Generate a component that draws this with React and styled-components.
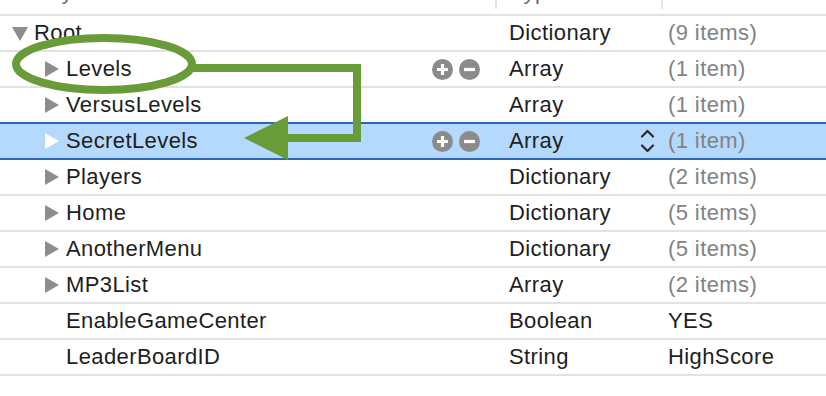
import React from "react";
import styled, { createGlobalStyle } from "styled-components";

const GlobalStyle = createGlobalStyle`
  html, body {
    margin: 0;
    padding: 0;
    background: #fff;
  }
  body {
    font-family: "Liberation Sans", Arial, sans-serif;
    -webkit-font-smoothing: antialiased;
  }
`;

const rows = [
  { key: "Root", level: 0, disclosure: "open", type: "Dictionary", value: "(9 items)", muted: true },
  { key: "Levels", level: 1, disclosure: "closed", type: "Array", value: "(1 item)", muted: true, controls: true },
  { key: "VersusLevels", level: 1, disclosure: "closed", type: "Array", value: "(1 item)", muted: true },
  { key: "SecretLevels", level: 1, disclosure: "closed", type: "Array", value: "(1 item)", muted: true, controls: true, selected: true },
  { key: "Players", level: 1, disclosure: "closed", type: "Dictionary", value: "(2 items)", muted: true },
  { key: "Home", level: 1, disclosure: "closed", type: "Dictionary", value: "(5 items)", muted: true },
  { key: "AnotherMenu", level: 1, disclosure: "closed", type: "Dictionary", value: "(5 items)", muted: true },
  { key: "MP3List", level: 1, disclosure: "closed", type: "Array", value: "(2 items)", muted: true },
  { key: "EnableGameCenter", level: 1, type: "Boolean", value: "YES" },
  { key: "LeaderBoardID", level: 1, type: "String", value: "HighScore" },
];

const PlistEditor = () => {
  return (
    <Page>
      <GlobalStyle />
      <Table>
        {/* column titles scrolled up, only the bottoms of the letters show */}
        <Header>
          <HeaderCell $pad={34}><HeaderLabel>Key</HeaderLabel></HeaderCell>
          <HeaderCell $pad={14} $divider><HeaderLabel>Type</HeaderLabel></HeaderCell>
          <HeaderCell $pad={7} $divider><HeaderLabel>Value</HeaderLabel></HeaderCell>
        </Header>
        {rows.map((row) => (
          <Row key={row.key} $selected={row.selected}>
            <KeyCell $level={row.level}>
              <Disclosure>
                {row.disclosure === "open" && <TriangleDown />}
                {row.disclosure === "closed" && <TriangleRight $selected={row.selected} />}
              </Disclosure>
              <KeyText>{row.key}</KeyText>
              {row.controls && (
                <Controls>
                  <RoundButton aria-label="add">
                    <svg width="21" height="21" viewBox="0 0 21 21">
                      <circle cx="10.5" cy="10.5" r="10.5" fill="#8b8b8b" />
                      <path d="M10.5 5v11M5 10.5h11" stroke="#fff" strokeWidth="3.2" />
                    </svg>
                  </RoundButton>
                  <RoundButton aria-label="remove">
                    <svg width="21" height="21" viewBox="0 0 21 21">
                      <circle cx="10.5" cy="10.5" r="10.5" fill="#8b8b8b" />
                      <path d="M5 10.5h11" stroke="#fff" strokeWidth="3.2" />
                    </svg>
                  </RoundButton>
                </Controls>
              )}
            </KeyCell>
            <TypeCell>
              {row.type}
              {row.selected && (
                <Stepper>
                  <svg width="15" height="26" viewBox="0 0 15 26">
                    <path d="M2 8.5L7.5 3L13 8.5M2 17.5L7.5 23L13 17.5" fill="none" stroke="#2b2b2b" strokeWidth="2.2" strokeLinecap="round" strokeLinejoin="round" />
                  </svg>
                </Stepper>
              )}
            </TypeCell>
            <ValueCell $muted={row.muted}>{row.value}</ValueCell>
          </Row>
        ))}
        <Annotation width="826" height="396" viewBox="0 0 826 396">
          <ellipse cx="104" cy="64" rx="88" ry="26" fill="none" stroke="#6a9b39" strokeWidth="8" />
          <path d="M192 68H357V138H282" fill="none" stroke="#6a9b39" strokeWidth="8" />
          <polygon points="244,138 288,116 288,160" fill="#6a9b39" />
        </Annotation>
      </Table>
    </Page>
  );
};

const Page = styled.div`
  width: 826px;
  height: 396px;
  overflow: hidden;
  background: #fff;
`;

const Table = styled.div`
  position: relative;
  display: flex;
  flex-direction: column;
  font-size: 22px;
  letter-spacing: 0.4px;
  color: #1e1e1e;
`;

const Header = styled.div`
  display: grid;
  grid-template-columns: 495px 166px 1fr;
  height: 14px;
  border-bottom: 2px solid #e2e2e2;
  overflow: hidden;
`;

const HeaderCell = styled.div`
  position: relative;
  padding-left: ${(p) => p.$pad}px;
  border-left: ${(p) => (p.$divider ? "2px solid #e4e4e4" : "none")};
  height: 9px;
`;

const HeaderLabel = styled.span`
  display: block;
  line-height: 22px;
  margin-top: -19px;
  color: #6a6a6a;
`;

const Row = styled.div`
  display: grid;
  grid-template-columns: 495px 166px 1fr;
  height: 34px;
  align-items: center;
  background: ${(p) => (p.$selected ? "#b5d8fd" : "#fff")};
  border-bottom: 2px solid ${(p) => (p.$selected ? "#2c68b8" : "#e2e2e2")};
  margin-top: ${(p) => (p.$selected ? "-2px" : "0")};
  border-top: ${(p) => (p.$selected ? "2px solid #2c68b8" : "none")};
`;

const KeyCell = styled.div`
  display: flex;
  align-items: center;
  padding-left: ${(p) => 10 + p.$level * 32}px;
  padding-right: 15px;
  height: 100%;
`;

const Disclosure = styled.span`
  width: 20px;
  margin-right: 4px;
  display: flex;
  justify-content: center;
  align-items: center;
  flex: none;
`;

const TriangleDown = styled.span`
  width: 0;
  height: 0;
  border-left: 8.5px solid transparent;
  border-right: 8.5px solid transparent;
  border-top: 14px solid #8d8d8d;
  margin-top: 2px;
`;

const TriangleRight = styled.span`
  width: 0;
  height: 0;
  border-top: 8px solid transparent;
  border-bottom: 8px solid transparent;
  border-left: 14px solid ${(p) => (p.$selected ? "#fff" : "#8d8d8d")};
`;

const KeyText = styled.span`
  flex: 1;
  white-space: nowrap;
`;

const Controls = styled.span`
  display: flex;
  gap: 6px;
  align-items: center;
`;

const RoundButton = styled.span`
  display: flex;
  width: 21px;
  height: 21px;
`;

const TypeCell = styled.div`
  position: relative;
  display: flex;
  align-items: center;
  height: 100%;
  padding-left: 14px;
`;

const Stepper = styled.span`
  position: absolute;
  left: 145px;
  top: 50%;
  transform: translateY(-50%);
  display: flex;
`;

const ValueCell = styled.div`
  padding-left: 7px;
  color: ${(p) => (p.$muted ? "#828282" : "#1e1e1e")};
  white-space: nowrap;
`;

const Annotation = styled.svg`
  position: absolute;
  top: 0;
  left: 0;
  pointer-events: none;
`;

export default PlistEditor;
